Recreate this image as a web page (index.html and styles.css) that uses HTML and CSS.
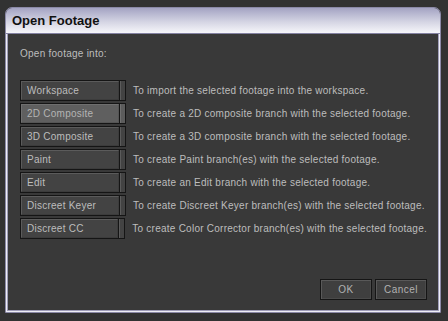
FILE: index.html
```html
<!DOCTYPE html>
<html lang="en">
<head>
    <meta charset="UTF-8">
    <title>Open Footage</title>
    <link rel="stylesheet" href="styles.css">
</head>
<body>
    <div class="window">
        <div class="titlebar">Open Footage</div>

        <div class="content">
            <p class="intro">Open footage into:</p>

            <div class="options">
                <div class="row">
                    <div class="btn"><span class="btn-main">Workspace</span><span class="btn-tab"></span></div>
                    <span class="desc">To import the selected footage into the workspace.</span>
                </div>
                <div class="row">
                    <div class="btn active"><span class="btn-main">2D Composite</span><span class="btn-tab"></span></div>
                    <span class="desc">To create a 2D composite branch with the selected footage.</span>
                </div>
                <div class="row">
                    <div class="btn"><span class="btn-main">3D Composite</span><span class="btn-tab"></span></div>
                    <span class="desc">To create a 3D composite branch with the selected footage.</span>
                </div>
                <div class="row">
                    <div class="btn"><span class="btn-main">Paint</span><span class="btn-tab"></span></div>
                    <span class="desc">To create Paint branch(es) with the selected footage.</span>
                </div>
                <div class="row">
                    <div class="btn"><span class="btn-main">Edit</span><span class="btn-tab"></span></div>
                    <span class="desc">To create an Edit branch with the selected footage.</span>
                </div>
                <div class="row">
                    <div class="btn"><span class="btn-main">Discreet Keyer</span><span class="btn-tab"></span></div>
                    <span class="desc">To create Discreet Keyer branch(es) with the selected footage.</span>
                </div>
                <div class="row">
                    <div class="btn"><span class="btn-main">Discreet CC</span><span class="btn-tab"></span></div>
                    <span class="desc">To create Color Corrector branch(es) with the selected footage.</span>
                </div>
            </div>

            <div class="footer">
                <button class="push">OK</button>
                <button class="push">Cancel</button>
            </div>
        </div>
    </div>
</body>
</html>
```

FILE: styles.css
```css
:root {
    --page-bg: #323232;
    --body-bg: #393939;
    --frame-dark: #8b89a7;
    --frame-light: #eeeef5;
    --btn-fill: #434343;
    --btn-edge: #5b5b5b;
    --btn-outline: #151515;
    --text: #bdbdbd;
}

body {
    margin: 0;
    padding: 7px 7px 8px 5px;
    background-color: var(--page-bg);
    font-family: 'Liberation Sans', Arial, sans-serif;
}

.window {
    width: 436px;
    height: 306px;
    box-sizing: border-box;
    border: 1px solid var(--frame-dark);
    border-radius: 7px 7px 0 0;
    overflow: hidden;
    display: flex;
    flex-direction: column;
}

.titlebar {
    height: 25px;
    padding-left: 6px;
    background: linear-gradient(#a4a3c3, #d4d4e3 55%, #f6f6fa);
    border-bottom: 1px solid #8482a2;
    color: #111;
    font-weight: bold;
    font-size: 13px;
    line-height: 26px;
}

.content {
    flex: 1;
    display: flex;
    flex-direction: column;
    background-color: var(--body-bg);
    border: 1px solid var(--frame-light);
    border-top: none;
    box-shadow: inset 1px 0 0 #a09eba, inset -1px 0 0 #a09eba, inset 0 -1px 0 #a09eba;
    padding: 14px 12px 11px 13px;
    color: var(--text);
    font-size: 10px;
    letter-spacing: 0.25px;
}

.intro {
    margin: 0 0 20px;
    line-height: 12px;
}

.options {
    display: flex;
    flex-direction: column;
    gap: 2px;
}

.row {
    display: flex;
    align-items: center;
    gap: 7px;
    height: 21px;
}

.btn {
    display: flex;
    gap: 1px;
    width: 106px;
    height: 21px;
    box-sizing: border-box;
    border: 1px solid var(--btn-outline);
    background-color: var(--btn-outline);
}

.btn-main {
    flex: 1;
    background-color: var(--btn-fill);
    border: 1px solid var(--btn-edge);
    border-right-color: #3c3c3c;
    border-bottom-color: #3c3c3c;
    padding-left: 5px;
    line-height: 17px;
    white-space: nowrap;
}

.btn-tab {
    width: 4px;
    background-color: var(--btn-fill);
    border-left: 1px solid var(--btn-edge);
}

.btn.active .btn-main {
    background-color: #5f5f5f;
    border-color: #6f6f6f #555 #555 #6f6f6f;
    color: #b4b4b4;
}

.btn.active .btn-tab {
    background-color: #5c5c5c;
    border-left-color: #707070;
}

.desc {
    white-space: nowrap;
}

.footer {
    margin-top: auto;
    display: flex;
    justify-content: flex-end;
    gap: 3px;
}

.push {
    width: 52px;
    height: 21px;
    padding: 0;
    background-color: #3f3f3f;
    border: 1px solid var(--btn-outline);
    box-shadow: inset 1px 1px 0 #595959, inset -1px -1px 0 #4a4a4a;
    color: #b2b2b2;
    font-family: 'Liberation Sans', Arial, sans-serif;
    font-size: 10px;
    letter-spacing: 0.5px;
}
```
